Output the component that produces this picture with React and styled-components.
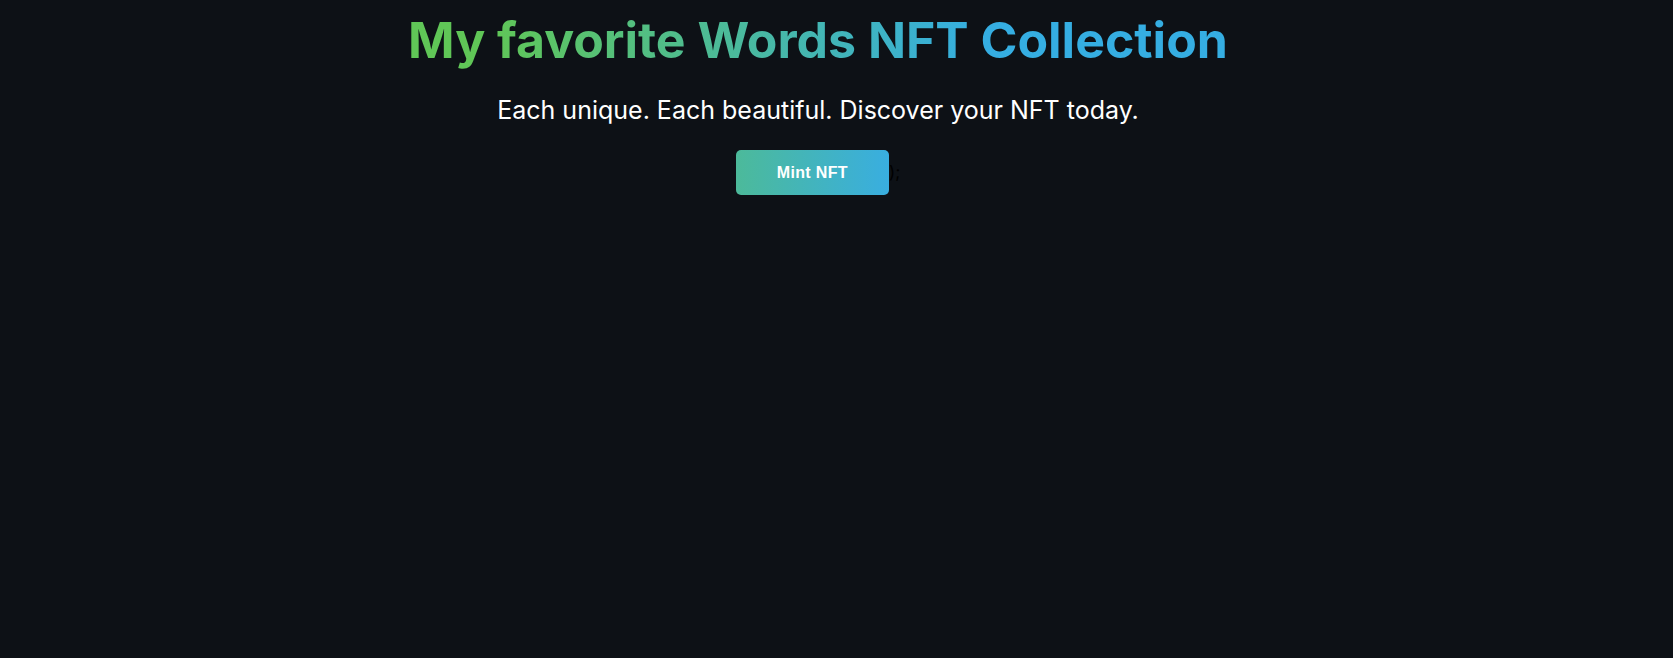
import React from "react";
import styled, { createGlobalStyle } from "styled-components";

const Global = createGlobalStyle`
  html, body { margin: 0; padding: 0; background: #0d1116; }
  body { font-family: Inter, "Liberation Sans", sans-serif; }
`;

const Page = styled.div`
  min-height: 658px;
  background-color: #0d1116;
  text-align: center;
  padding: 10px 37px 0 0;
  box-sizing: border-box;
`;

const Title = styled.h1`
  margin: 0;
  font-family: Inter, sans-serif;
  font-size: 50px;
  font-weight: 700;
  line-height: normal;
  letter-spacing: -0.02px;
  background: linear-gradient(to right, #60c657 30%, #35aee2 60%);
  -webkit-background-clip: text;
  background-clip: text;
  -webkit-text-fill-color: transparent;
  color: transparent;
`;

const SubText = styled.p`
  margin: 25px 0 25px;
  font-family: Inter, sans-serif;
  font-size: 25px;
  line-height: normal;
  color: #ffffff;
`;

const ActionRow = styled.div`
  font-family: Inter, sans-serif;
  font-size: 17px;
  color: #000000;
`;

const MintButton = styled.button`
  height: 45px;
  border: 0;
  padding: 0 41px;
  border-radius: 5px;
  font-family: "Liberation Sans", Arial, sans-serif;
  font-size: 16px;
  font-weight: 700;
  letter-spacing: 0.35px;
  color: #ffffff;
  cursor: pointer;
  background: linear-gradient(to right, #4cba9a, #39aee0);
`;

export default function App() {
  return (
    <>
      <Global />
      <Page>
        <Title>My favorite Words NFT Collection</Title>
        <SubText>Each unique. Each beautiful. Discover your NFT today.</SubText>
        <ActionRow>
          <MintButton>Mint NFT</MintButton>);
        </ActionRow>
      </Page>
    </>
  );
}
